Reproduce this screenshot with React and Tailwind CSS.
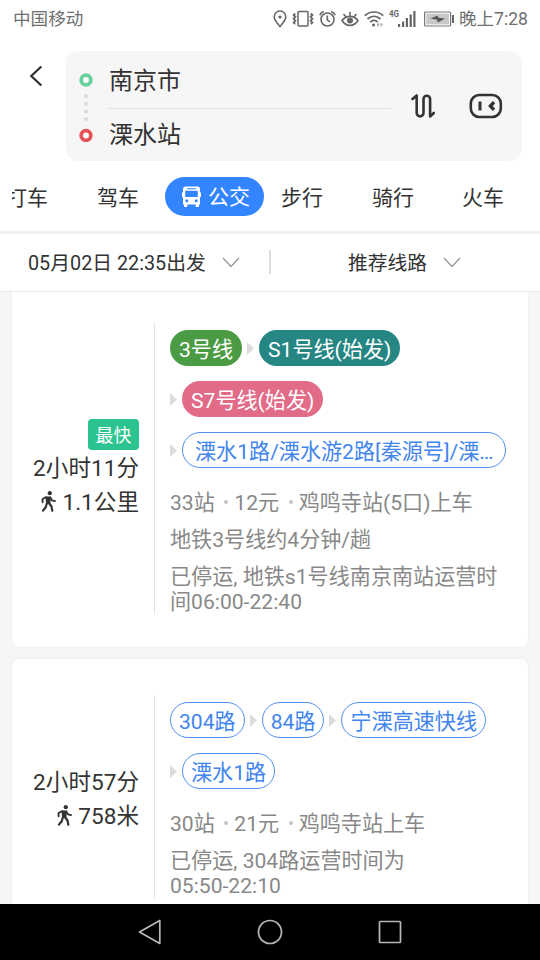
// src/pages/RoutePlan.jsx

const routes = [
  {
    id: 1,
    fastest: true,
    duration: '2小时11分',
    walk: '1.1公里',
    rows: [
      [
        { name: '3号线', style: 'bg-[#4b9b45] text-white border-transparent px-2' },
        { name: 'S1号线(始发)', style: 'bg-[#258683] text-white border-transparent px-2' },
      ],
      [{ name: 'S7号线(始发)', style: 'bg-[#e26b87] text-white border-transparent px-2' }],
      [{ name: '溧水1路/溧水游2路[秦源号]/溧…', style: 'text-[#4285ee] border-[#4f8df0] w-[324px] pl-[12px]' }],
    ],
    meta: ['33站', '12元', '鸡鸣寺站(5口)上车'],
    notes: [['地铁3号线约4分钟/趟'], ['已停运, 地铁s1号线南京南站运营时', '间06:00-22:40']],
  },
  {
    id: 2,
    fastest: false,
    duration: '2小时57分',
    walk: '758米',
    rows: [
      [
        { name: '304路', style: 'text-[#4285ee] border-[#4f8df0] px-2' },
        { name: '84路', style: 'text-[#4285ee] border-[#4f8df0] px-2' },
        { name: '宁溧高速快线', style: 'text-[#4285ee] border-[#4f8df0] px-2' },
      ],
      [{ name: '溧水1路', style: 'text-[#4285ee] border-[#4f8df0] px-2' }],
    ],
    meta: ['30站', '21元', '鸡鸣寺站上车'],
    notes: [['已停运, 304路运营时间为', '05:50-22:10']],
  },
];

function StatusBar() {
  return (
    <div className="flex h-[38px] shrink-0 items-center pl-[13px] pr-3 text-[17.6px] text-[#707070]">
      <span className="flex-1 pt-px">中国移动</span>
      <svg className="mr-[5px]" width="14" height="18" viewBox="0 0 14 18" fill="none" stroke="#666" strokeWidth="1.6">
        <path d="M7 16.5C4 12.8 1.2 10 1.2 6.8a5.8 5.8 0 0 1 11.6 0C12.8 10 10 12.8 7 16.5Z" />
        <circle cx="7" cy="7" r="1.6" fill="#666" stroke="none" />
      </svg>
      <svg className="mr-[5px]" width="22" height="18" viewBox="0 0 22 18" fill="none" stroke="#666" strokeWidth="1.5">
        <rect x="6" y="1.5" width="10" height="14.5" rx="1" />
        <path d="M3.2 3.5 1.6 5l1.8 1.8-1.8 2 1.8 2-1.8 1.8 1.6 1.5M18.8 3.5 20.4 5l-1.8 1.8 1.8 2-1.8 2 1.8 1.8-1.6 1.5" strokeWidth="1.8" />
      </svg>
      <svg className="mr-[5px]" width="17" height="18" viewBox="0 0 17 18" fill="none" stroke="#666" strokeWidth="1.6">
        <circle cx="8.5" cy="9.5" r="6.5" />
        <path d="M8.3 5.5v4.3l2.7 2.2M.8 5.2C1.5 3.2 2.8 2 4.8 1.4M16.2 5.2c-.7-2-2-3.2-4-3.8" />
      </svg>
      <svg className="mr-[5px]" width="18" height="18" viewBox="0 0 18 18" fill="none" stroke="#666" strokeWidth="1.6">
        <path d="M1 10.5c4-5.5 12-5.5 16 0-4 6.5-12 6.5-16 0ZM9 6V2M4.7 6.5 2.5 4M13.3 6.5 15.5 4" />
        <circle cx="9" cy="10.5" r="3" fill="#666" stroke="none" />
      </svg>
      <svg className="mr-[5px]" width="20" height="18" viewBox="0 0 20 18" fill="none" stroke="#666" strokeWidth="1.7">
        <path d="M.8 5.6C6 .8 14 .8 19.2 5.6M3.5 9c4-3.6 9-3.6 13 0M6.3 12c2.2-2 5.2-2 7.4 0" />
        <circle cx="9.5" cy="15" r="1.5" fill="#666" stroke="none" />
        <path d="m15 12.5-2.5 2.3 2.5 2.3Zm1.5 0 2.5 2.3-2.5 2.3Z" fill="#aaa" stroke="none" />
      </svg>
      <svg className="mr-2" width="27" height="20" viewBox="0 0 27 20" fill="#666">
        <text x="0" y="8" fontSize="9.5" fontWeight="700" textLength="10" lengthAdjust="spacingAndGlyphs">4G</text>
        <path d="M9 15h2.2v3H9zM13 12.5h2.2V18H13zM16.8 9H19v9h-2.2zM20.6 5.5h2.2V18h-2.2zM24.3 2h2.2v16h-2.2z" />
      </svg>
      <svg className="mr-[5px]" width="30" height="18" viewBox="0 0 30 18">
        <rect x=".6" y="2" width="26" height="14" rx="1" fill="#fff" stroke="#777" strokeWidth="1.2" />
        <rect x="2.2" y="3.6" width="22.8" height="10.8" fill="#c8c8c8" />
        <path d="m6.500 8.500 7-3 1 2.300 6.500.7-7 4-1-2.700Z" fill="#555" />
        <path d="M28 5h2v8h-2z" fill="#666" />
      </svg>
      <span className="pt-px">晚上7:28</span>
    </div>
  );
}

function SearchHeader() {
  return (
    <div className="flex h-[123px] shrink-0 pt-[13px] pl-[29px]">
      <svg className="mt-[14px] mr-[23px]" width="14" height="22" viewBox="0 0 14 22" fill="none" stroke="#333" strokeWidth="2.3">
        <path d="M12.3 1.5 2.3 11l10 9.5" />
      </svg>
      <div className="flex h-[110px] w-[456px] items-center rounded-xl bg-[#f6f6f6]">
        <svg className="ml-[13px] mr-4" width="14" height="72" viewBox="0 0 14 72" fill="none">
          <circle cx="7" cy="10" r="4.8" stroke="#68cf9e" strokeWidth="3.8" fill="#fff" />
          <circle cx="7" cy="65.5" r="4.8" stroke="#e55257" strokeWidth="3.8" fill="#fff" />
          <g fill="#d9d9d9">
            <circle cx="7" cy="26" r="1.9" />
            <circle cx="7" cy="33.7" r="1.9" />
            <circle cx="7" cy="41.4" r="1.9" />
            <circle cx="7" cy="49.1" r="1.9" />
          </g>
        </svg>
        <div className="w-[282px] pt-[5px] text-[24px] text-[#333]">
          <div className="h-[55px] border-b border-[#dedede] leading-[55px]">南京市</div>
          <div className="h-[54px] leading-[52px]">溧水站</div>
        </div>
        <svg className="ml-5" width="24" height="26" viewBox="0 0 24 26" fill="none" stroke="#333" strokeWidth="2.6" strokeLinecap="round" strokeLinejoin="round">
          <path d="M1.5 6 5.7 2.5V20a3.4 3.4 0 0 0 6.8 0V6a3.3 3.3 0 0 1 6.6 0v17.5L22.8 20" />
        </svg>
        <svg className="ml-[34px]" width="34" height="26" viewBox="0 0 34 26" fill="none" stroke="#333" strokeWidth="2.6">
          <rect x="1.8" y="2" width="30" height="22" rx="8.5" />
          <path d="M11 8.5v9" strokeWidth="3" />
          <path d="m25 9.2-3.6 3.8 3.6 3.8" strokeWidth="3.4" />
        </svg>
      </div>
    </div>
  );
}

function Tabs() {
  return (
    <div className="flex h-[70px] shrink-0 items-center pt-px text-[21px] text-[#333]">
      {/* first tab is scrolled partly out of view */}
      <div className="ml-3 flex w-9 justify-end overflow-hidden whitespace-nowrap pt-[4px]">
        <span>打车</span>
      </div>
      <span className="ml-[49px] pt-[4px]">驾车</span>
      <div className="ml-[26px] flex h-[39px] w-[99px] items-center rounded-full bg-[#3385ff] pl-[17px] text-white">
        <svg width="19" height="22" viewBox="0 0 19 22" fill="#fff">
          <path fillRule="evenodd" d="M3.5.5h12A2.5 2.5 0 0 1 18 3v3.5h1V11h-1v7.5h-1V21h-3.3v-2.5H5.3V21H2v-2.5H1V11H0V6.500h1V3A2.5 2.5 0 0 1 3.500.5ZM3.200 4.800V11h12.600V4.800ZM4.800 13.300a1.500 1.500 0 1 0 0 3 1.500 1.500 0 0 0 0-3Zm9.400 0a1.500 1.500 0 1 0 0 3 1.500 1.500 0 0 0 0-3ZM5 2.300v.9h9v-.9Z" />
        </svg>
        <span className="ml-[7px] pt-[3px]">公交</span>
      </div>
      <span className="ml-[17px] pt-[4px]">步行</span>
      <span className="ml-[49px] pt-[4px]">骑行</span>
      <span className="ml-[48px] pt-[4px]">火车</span>
    </div>
  );
}

function Chevron() {
  return (
    <svg className="-mt-px" width="18" height="11" viewBox="0 0 18 11" fill="none" stroke="#999" strokeWidth="1.3">
      <path d="m1 1 8 8.5L17 1" />
    </svg>
  );
}

function Filters() {
  return (
    <div className="flex h-[61px] shrink-0 items-center border-t-[3px] border-b border-t-[#f2f2f2] border-b-[#ebebeb] bg-white text-[19.8px] text-[#333]">
      <div className="flex w-[269px] items-center gap-4 pl-7">
        <span className="pt-[2px]">05月02日 22:35出发</span>
        <Chevron />
      </div>
      <div className="-mt-0.5 h-6 w-[2px] bg-[#dedede]" />
      <div className="flex items-center gap-4 pl-[77px]">
        <span className="pt-[2px]">推荐线路</span>
        <Chevron />
      </div>
    </div>
  );
}

function Arrow() {
  return (
    <svg width="7" height="13" viewBox="0 0 7 13" fill="#dcdcdc">
      <path d="M0 0 7 6.5 0 13Z" />
    </svg>
  );
}

function WalkIcon() {
  return (
    <svg className="mr-[6px] -mt-[3px]" width="15" height="21" viewBox="0 0 15 21" fill="none" stroke="#333" strokeLinecap="round" strokeLinejoin="round">
      <circle cx="8.8" cy="2.2" r="2.1" fill="#333" stroke="none" />
      <path d="M5.3 6.200h4L8.500 12.500 5.800 12Z" fill="#333" strokeWidth="1.600" />
      <path d="M5.200 6.200 1.600 8v3.200M9.300 6.500l1.700 2.800 3 .8" strokeWidth="1.900" />
      <path d="M5.800 12.500 4.800 16 2 19.700M8.300 12.500l2.200 3 .8 4.200" strokeWidth="2.200" />
    </svg>
  );
}

function RouteBody({ route }) {
  return (
    <div className="flex">
      <div className="flex w-[127px] flex-col items-end justify-center pt-[2px] text-[22.6px] leading-[34px] text-[#333]">
        {route.fastest && (
          <span className="mb-[2px] h-[31px] rounded bg-[#2bc491] px-[7.5px] text-[18px] leading-[34px] text-white">最快</span>
        )}
        <span className={route.fastest ? '' : 'mt-1'}>{route.duration}</span>
        <span className="flex items-center">
          <WalkIcon />
          {route.walk}
        </span>
      </div>
      <div className="ml-[15px] w-px bg-[#e3e3e3]" />
      <div className="flex-1 pt-[7px] pl-[15px] text-[21.1px] leading-[25px] whitespace-nowrap text-[#888]">
        <div className="flex flex-col gap-[15px]">
          {route.rows.map((row, r) => (
            <div key={r} className="flex items-center gap-[5px]">
              {row.map((line, i) => (
                <div key={line.name} className="flex items-center gap-[5px]">
                  {(r > 0 || i > 0) && <Arrow />}
                  <span className={`h-9 rounded-full border-[1.5px] leading-[37px] ${line.style}`}>{line.name}</span>
                </div>
              ))}
            </div>
          ))}
        </div>
        <div className="mt-[22px] flex items-center">
          {route.meta.map((text, i) => (
            <span key={text} className="flex items-center">
              {i > 0 && <i className="mr-[6px] -mt-0.5 ml-[9.5px] size-1 rounded-full bg-[#c4c4c4]" />}
              {text}
            </span>
          ))}
        </div>
        {route.notes.map((note) => (
          <div key={note[0]} className="mt-[12px]">
            {note.map((text) => (
              <p key={text}>{text}</p>
            ))}
          </div>
        ))}
      </div>
    </div>
  );
}

function NavBar() {
  return (
    <div className="flex h-[56px] shrink-0 items-center justify-center gap-[94px] bg-black">
      <svg width="26" height="26" viewBox="0 0 26 26" fill="none" stroke="#b8b8b8" strokeWidth="1.7" strokeLinejoin="round">
        <path d="M22.800 1.500v23L2.500 13Z" />
      </svg>
      <svg width="26" height="26" viewBox="0 0 26 26" fill="none" stroke="#b8b8b8" strokeWidth="1.7">
        <circle cx="13" cy="13" r="11.5" />
      </svg>
      <svg width="26" height="26" viewBox="0 0 26 26" fill="none" stroke="#b8b8b8" strokeWidth="1.7">
        <rect x="2.5" y="2.5" width="21" height="21" rx="1" />
      </svg>
    </div>
  );
}

export default function App() {
  return (
    <div className="flex h-[960px] w-[540px] flex-col overflow-hidden bg-white font-[Roboto,'Noto_Sans_CJK_SC',sans-serif]">
      <StatusBar />
      <SearchHeader />
      <Tabs />
      <Filters />
      <div className="flex min-h-0 flex-1 flex-col gap-3 overflow-hidden bg-[#f6f6f6] px-3">
        <div className="h-[355px] shrink-0 rounded-b-lg bg-white pt-[31px] shadow-[0_0_5px_rgba(0,0,0,0.04)]">
          <RouteBody route={routes[0]} />
        </div>
        <div className="shrink-0 rounded-lg bg-white pt-9 pb-9 shadow-[0_0_5px_rgba(0,0,0,0.04)]">
          <RouteBody route={routes[1]} />
        </div>
      </div>
      <NavBar />
    </div>
  );
}
